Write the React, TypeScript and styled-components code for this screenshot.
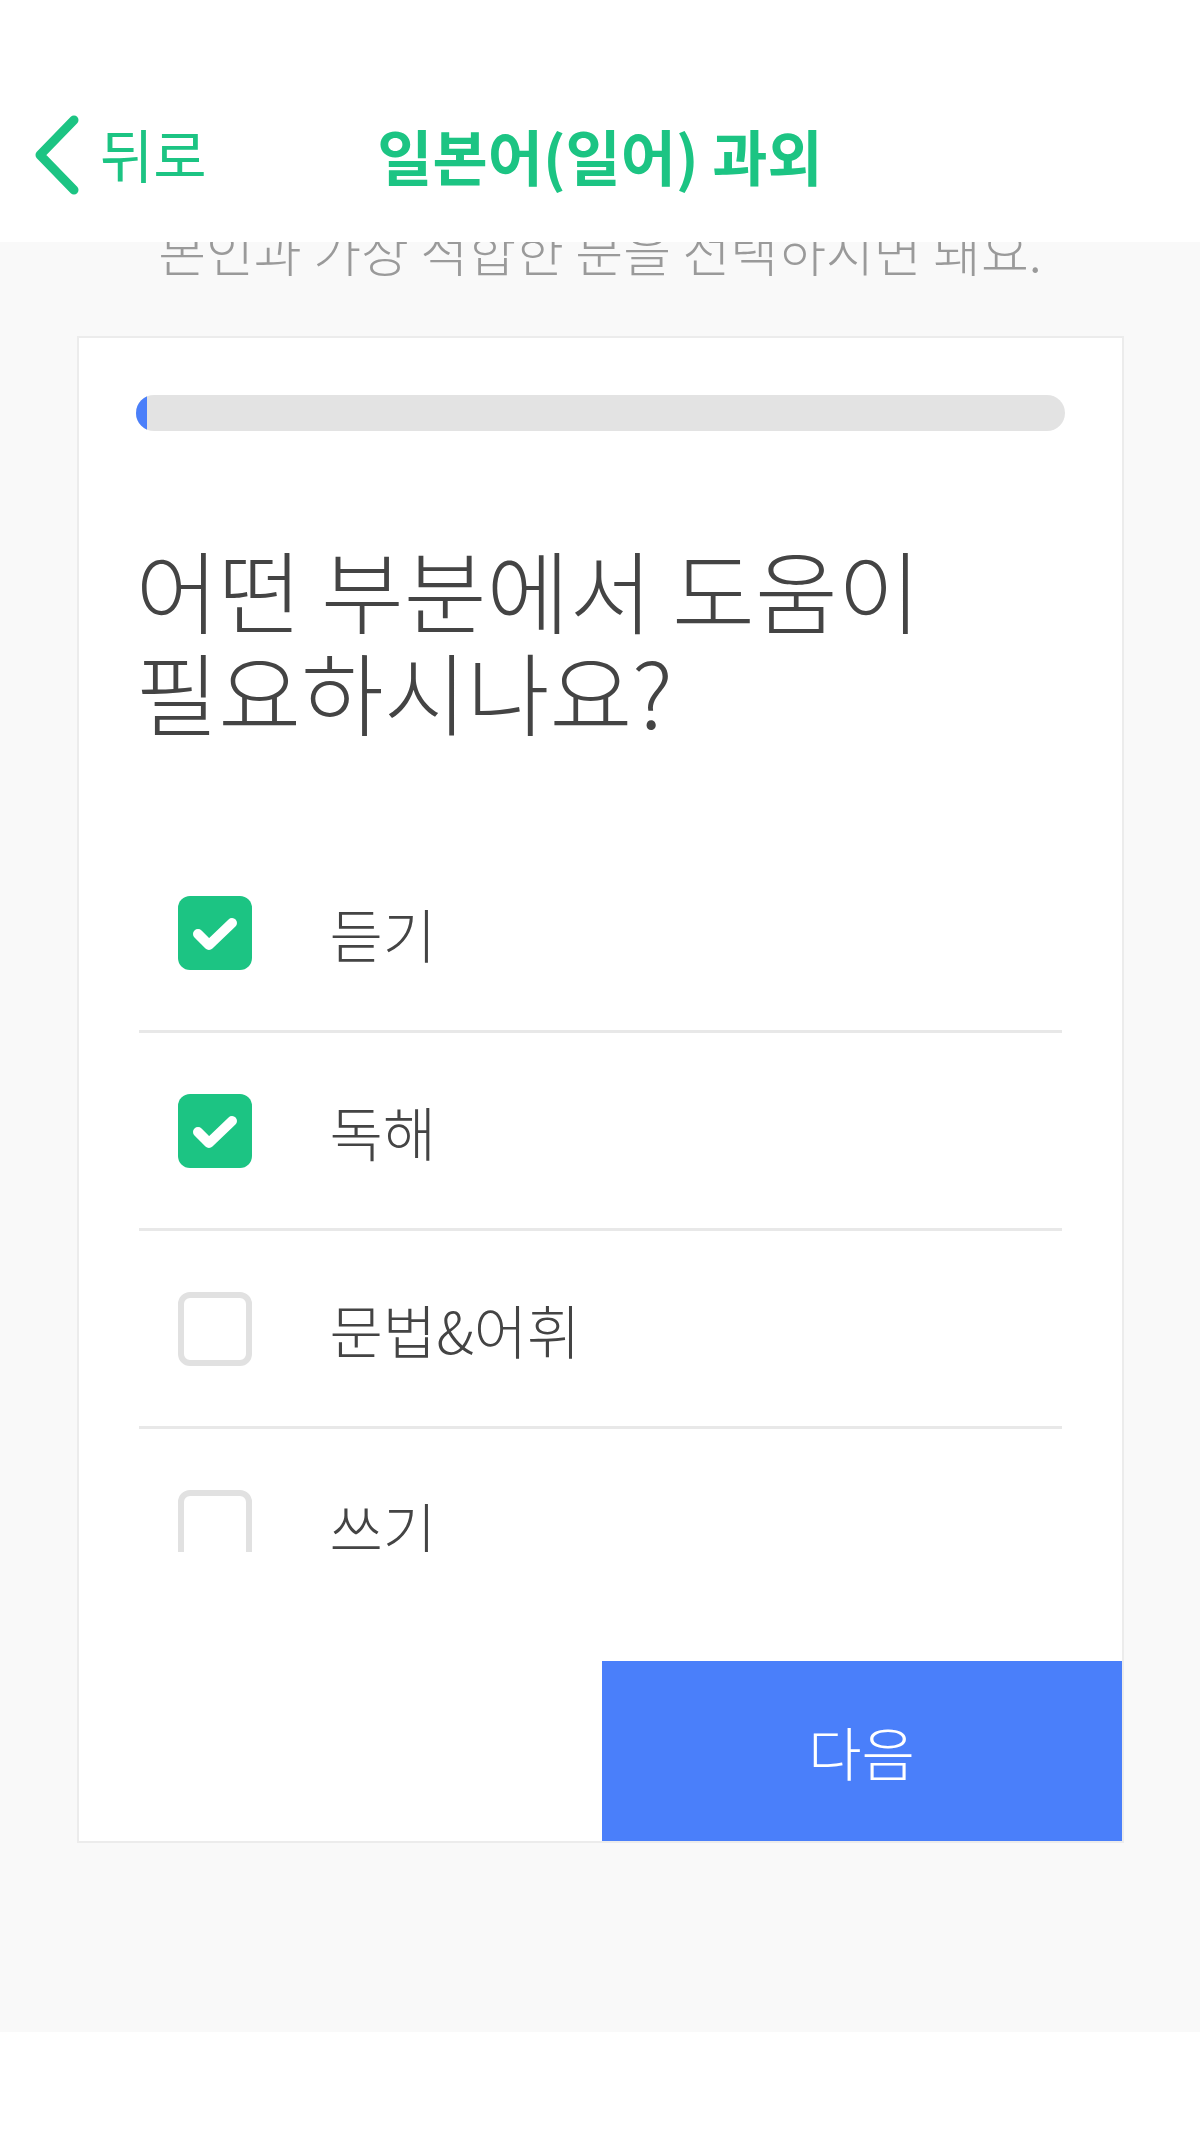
import React from 'react';
import styled, { createGlobalStyle } from 'styled-components';

const GREEN = '#1cc483';
const BLUE = '#4a7ffa';
const FONT = `'Noto Sans CJK KR', 'Noto Sans', sans-serif`;

const options = [
  { label: '듣기', checked: true },
  { label: '독해', checked: true },
  { label: '문법&어휘', checked: false },
  { label: '쓰기', checked: false },
];

export default function App() {
  return (
    <Page>
      <GlobalStyle />
      <Header>
        <BackButton>
          <svg width='52' height='86' viewBox='0 0 52 86'>
            <polyline
              points='44,8 10,43 44,78'
              fill='none'
              stroke={GREEN}
              strokeWidth='9'
              strokeLinecap='round'
              strokeLinejoin='round'
            />
          </svg>
          <span>뒤로</span>
        </BackButton>
        <Title>일본어(일어) 과외</Title>
        <div />
      </Header>
      <Main>
        <Subtitle>본인과 가장 적합한 분을 선택하시면 돼요.</Subtitle>
        <Card>
          <CardBody>
            <Progress>
              <ProgressFill />
            </Progress>
            <Question>
              어떤 부분에서 도움이
              <br />
              필요하시나요?
            </Question>
          </CardBody>
          <OptionList>
            {options.map((o) => (
              <Option key={o.label}>
                <Check $checked={o.checked}>
                  {o.checked && (
                    <svg width='74' height='74' viewBox='0 0 74 74'>
                      <polyline
                        points='20,38 31,49 54,27'
                        fill='none'
                        stroke='#fff'
                        strokeWidth='10'
                        strokeLinecap='round'
                        strokeLinejoin='round'
                      />
                    </svg>
                  )}
                </Check>
                <OptionLabel>{o.label}</OptionLabel>
              </Option>
            ))}
          </OptionList>
          <Footer>
            <NextButton>다음</NextButton>
          </Footer>
        </Card>
      </Main>
    </Page>
  );
}

const GlobalStyle = createGlobalStyle`
  body {
    margin: 0;
    background: #fff;
    font-family: ${FONT};
  }
`;

const Page = styled.div`
  width: 1200px;
  height: 2130px;
  display: flex;
  flex-direction: column;
  background: #fff;
`;

const Header = styled.header`
  height: 242px;
  flex-shrink: 0;
  display: grid;
  grid-template-columns: 1fr auto 1fr;
  align-items: center;
  padding-top: 68px;
  box-sizing: border-box;
  background: #fff;
`;

const BackButton = styled.div`
  display: flex;
  align-items: center;
  gap: 18px;
  padding-left: 30px;
  color: ${GREEN};
  font-size: 58px;
  line-height: 1;
  span {
    margin-top: -4px;
  }
`;

const Title = styled.h1`
  margin: 0;
  color: ${GREEN};
  font-size: 60px;
  font-weight: 700;
  line-height: 1;
`;

const Main = styled.main`
  height: 1790px;
  flex-shrink: 0;
  overflow: hidden;
  background: #f9f9f9;
  display: flex;
  flex-direction: column;
  align-items: center;
`;

const Subtitle = styled.p`
  margin: -17px 0 0;
  font-size: 52px;
  font-weight: 300;
  line-height: 50px;
  color: #9a9a9a;
`;

const Card = styled.section`
  margin-top: 61px;
  width: 1047px;
  box-sizing: border-box;
  background: #fff;
  border: 2px solid #ececec;
  display: flex;
  flex-direction: column;
`;

const CardBody = styled.div`
  padding: 57px 57px 0;
`;

const Progress = styled.div`
  height: 36px;
  border-radius: 18px;
  background: #e3e3e3;
  overflow: hidden;
`;

const ProgressFill = styled.div`
  width: 11px;
  height: 100%;
  background: ${BLUE};
`;

const Question = styled.h2`
  margin: 106px 0 0;
  font-size: 90px;
  font-weight: 300;
  line-height: 102px;
  color: #444;
`;

const OptionList = styled.ul`
  list-style: none;
  margin: 94px 60px 0;
  padding: 0;
  height: 717px;
  overflow: hidden;
`;

const Option = styled.li`
  height: 198px;
  box-sizing: border-box;
  display: flex;
  align-items: center;
  padding-left: 39px;
  border-bottom: 3px solid #e8e8e8;
`;

const Check = styled.span<{ $checked: boolean }>`
  width: 74px;
  height: 74px;
  box-sizing: border-box;
  border-radius: 12px;
  display: flex;
  align-items: center;
  justify-content: center;
  background: ${(p) => (p.$checked ? GREEN : '#fff')};
  border: ${(p) => (p.$checked ? 'none' : '6px solid #e1e1e1')};
`;

const OptionLabel = styled.span`
  margin-left: 78px;
  font-size: 58px;
  font-weight: 300;
  color: #444;
`;

const Footer = styled.div`
  margin-top: 109px;
  display: flex;
  justify-content: flex-end;
`;

const NextButton = styled.button`
  width: 520px;
  height: 180px;
  border: none;
  background: ${BLUE};
  color: #fff;
  font-family: ${FONT};
  font-size: 58px;
  font-weight: 300;
`;
